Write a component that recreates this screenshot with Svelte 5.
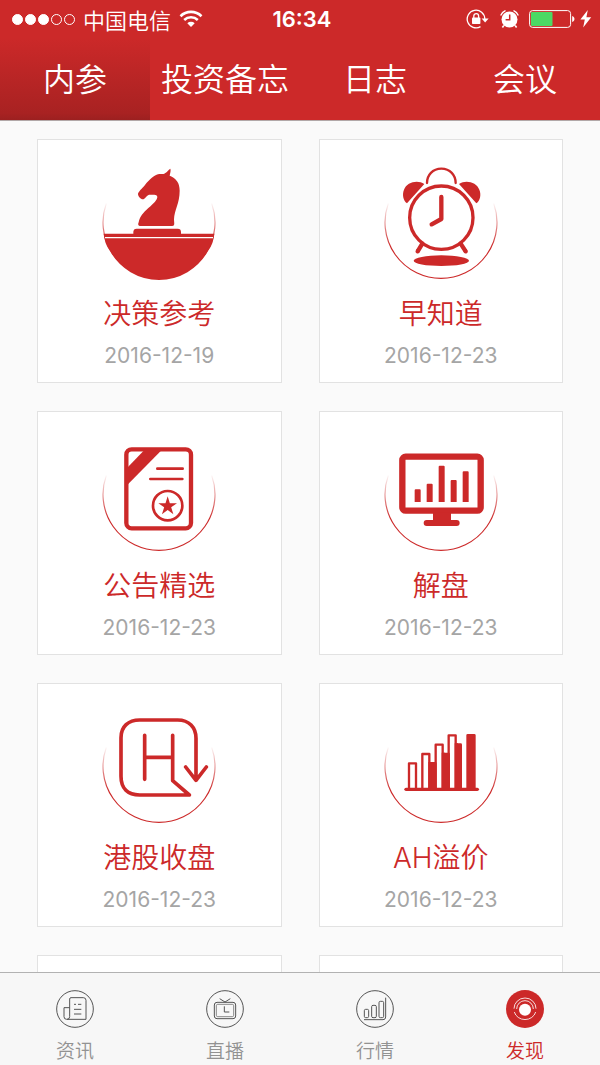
<script lang="ts">
	type Report = { icon: string; title: string; date: string };

	const sections = ['内参', '投资备忘', '日志', '会议'];

	const reports: Report[] = [
		{ icon: 'knight', title: '决策参考', date: '2016-12-19' },
		{ icon: 'alarm', title: '早知道', date: '2016-12-23' },
		{ icon: 'notice', title: '公告精选', date: '2016-12-23' },
		{ icon: 'monitor', title: '解盘', date: '2016-12-23' },
		{ icon: 'hk', title: '港股收盘', date: '2016-12-23' },
		{ icon: 'bars', title: 'AH溢价', date: '2016-12-23' },
		{ icon: '', title: '', date: '' },
		{ icon: '', title: '', date: '' }
	];

	const tabs = [
		{ icon: 'news', label: '资讯' },
		{ icon: 'live', label: '直播' },
		{ icon: 'market', label: '行情' },
		{ icon: 'discover', label: '发现' }
	];

	let section = $state('内参');
	let tab = $state('发现');
</script>

<div class="screen">
	<header>
		<div class="status">
			<div class="carrier">
				<span class="signal">
					{#each [1, 1, 1, 0, 0] as full}
						<i class:full></i>
					{/each}
				</span>
				<span>中国电信</span>
				<svg class="wifi" width="24" height="18" viewBox="0 0 24 18">
					<path d="M1.5 6.2a15 15 0 0 1 21 0M5.2 10a9.8 9.8 0 0 1 13.6 0" fill="none" stroke="#fff" stroke-width="2.6" />
					<path d="M8.3 13.2a5.4 5.4 0 0 1 7.4 0L12 17z" fill="#fff" />
				</svg>
			</div>
			<time>16:34</time>
			<div class="indicators">
				<svg width="23" height="20" viewBox="0 0 23 20">
					<path d="M18.8 10A8.8 8.8 0 1 0 14.5 17.6" fill="none" stroke="#fff" stroke-width="1.3" />
					<path d="M15.6 9.4h7l-3.5 4z" fill="#fff" />
					<rect x="6" y="8.6" width="8.4" height="6.4" rx="0.8" fill="#fff" />
					<path d="M7.8 9V7a2.4 2.4 0 0 1 4.8 0v2" fill="none" stroke="#fff" stroke-width="1.3" />
				</svg>
				<svg width="19" height="20" viewBox="0 0 19 20">
					<circle cx="9.500" cy="10.500" r="8" fill="#fff" />
					<path d="M1 6A8 8 0 0 1 5 1.8M18 6a8 8 0 0 0-4-4.2" fill="none" stroke="#fff" stroke-width="1.4" stroke-linecap="round" />
					<path d="M3.8 16.5l-1.4 2M15.2 16.5l1.4 2" stroke="#fff" stroke-width="1.6" />
					<path d="M9.7 5.5v5.2H5.6" fill="none" stroke="#cc2929" stroke-width="1.5" />
				</svg>
				<svg width="46" height="18" viewBox="0 0 46 18">
					<rect x="0.6" y="0.6" width="41" height="16.8" rx="3" fill="none" stroke="#fff" stroke-width="1" />
					<rect x="2" y="2" width="21.5" height="14" rx="1" fill="#4cd964" />
					<path d="M43.2 6v6c3-1 3-5 0-6z" fill="#fff" />
				</svg>
				<svg width="12" height="18" viewBox="0 0 12 18">
					<path d="M7.8 0L0.4 9.6h4.4L3.2 17.6 11.2 7.2H6.4z" fill="#fff" />
				</svg>
			</div>
		</div>
		<nav class="sections">
			{#each sections as name}
				<button class:active={section === name} onclick={() => (section = name)}>{name}</button>
			{/each}
		</nav>
	</header>

	<main>
		{#each reports as report}
			<a class="card" href="#{report.icon}">
				{#if report.icon}
					<svg class="picture" viewBox="0 0 420 420">
						<defs>
							<linearGradient id="fade-{report.icon}" gradientUnits="userSpaceOnUse" x1="0" y1="155" x2="0" y2="290">
								<stop offset="0" stop-color="#cc2929" stop-opacity="0" />
								<stop offset="1" stop-color="#cc2929" />
							</linearGradient>
						</defs>
						<path
							d="M52 160A168 168 0 1 0 368 160"
							fill="none"
							stroke="url(#fade-{report.icon})"
							stroke-width="3.5"
						/>
						{#if report.icon === 'knight'}
							<path class="solid" d="M44 251H376Q374 280 357 303A168 168 0 0 1 63 303Q46 280 44 251z" />
							<path d="M48 263H372" stroke="#fff" stroke-width="4" />
							<path class="solid" d="M133 254v-8q0-10 10-10h123q10 0 10 10v8z" />
							<path
								class="solid"
								d="M244 56C246 60 244 68 242 77C261 84 272 98 272 122C272 160 256 180 255 208C255 216 257 222 255 225Q254 228 249 228H152Q145 226 149 217C153 198 163 188 178 174C194 160 205 150 205 140Q204 134 196 134H180C174 136 171 142 165 147C158 151 147 140 147 132C148 125 158 117 168 105C182 88 196 76 207 73C216 71 222 74 228 70C235 66 238 59 244 56z"
							/>
						{:else if report.icon === 'alarm'}
							<path class="line" stroke-width="7" d="M168 99c0-24 17-43 43-43s43 19 43 43" />
							<path class="solid" d="M108 160c-12-9-15-27-9-41 8-22 40-31 61-17z" />
							<path class="solid" d="M316 160c12-9 15-27 9-41-8-22-40-31-61-17z" />
							<circle class="line" stroke-width="10" cx="211" cy="203" r="95" />
							<path class="line" stroke-width="13" d="M211 141v66l-29 16" />
							<path class="line" stroke-width="13" stroke-linecap="butt" d="M154 281l-14 23M269 281l15 23" />
							<circle class="solid" cx="141" cy="302" r="6" />
							<circle class="solid" cx="283" cy="302" r="6" />
							<ellipse class="solid" cx="211" cy="332" rx="83" ry="16" />
						{:else if report.icon === 'notice'}
							<g transform="translate(0 24)">
								<rect class="line" stroke-width="13" x="112" y="58" width="194" height="237" rx="16" />
								<path class="solid" d="M164 62h52L114 166v-52z" />
								<path class="line" stroke-width="8" stroke-linecap="butt" d="M205 116h76M184 147h96" />
								<circle class="line" stroke-width="8" cx="236" cy="227" r="44" />
								<path
									class="solid"
									d="M236 199l6.5 20.5h21.5l-17.5 12.6 6.7 20.5-17.2-12.8-17.2 12.8 6.7-20.5L208 219.500h21.500z"
								/>
							</g>
						{:else if report.icon === 'monitor'}
							<g transform="translate(0 24)">
								<rect class="line" stroke-width="19" x="94" y="80" width="235" height="162" rx="10" />
								<path class="solid" d="M186 248h54v22h17q9 0 9 9t-9 9h-90q-9 0-9-9t9-9h19z" />
								<path
									class="solid"
									d="M131 181q0-3 3-3h12q3 0 3 3v35h-18zM167 164q0-3 3-3h12q3 0 3 3v52h-18zM203 110q0-3 3-3h12q3 0 3 3v106h-18zM239 153q0-3 3-3h12q3 0 3 3v63h-18zM275 127q0-3 3-3h12q3 0 3 3v89h-18z"
								/>
							</g>
						{:else if report.icon === 'hk'}
							<g transform="translate(0 18)">
								<path
									class="line"
									stroke-width="11"
									d="M167 106v132M167 172h84M251 106v136l50 43H152c-36 0-56-20-56-56V113c0-33 22-53 56-53h114c34 0 55 22 55 55v122M290 201l31 40 31-40"
								/>
							</g>
						{:else}
							<g transform="translate(0 18)">
								<path class="line" stroke-width="10" d="M105 268h214" />
								<path
									class="line"
									stroke-width="7"
									d="M114 265v-75h21v75M154 265V162h21v103M194 265V134h21v131M233 265V106h21v159"
								/>
								<path
									class="solid"
									d="M178 186h15q4 0 4 4v76h-19zM218 158h15q4 0 4 4v104h-19zM256 130h13q4 0 4 4v132h-17zM286 106q0-4 4-4h20q4 0 4 4v160h-28z"
								/>
								<path class="solid" d="M172 186h10v80h-10zM212 158h10v108h-10zM251 130h10v136h-10z" />
							</g>
						{/if}
					</svg>
					<h2>{report.title}</h2>
					<time>{report.date}</time>
				{/if}
			</a>
		{/each}
	</main>

	<nav class="tabbar">
		{#each tabs as item}
			<button class:active={tab === item.label} onclick={() => (tab = item.label)}>
				<svg width="38" height="38" viewBox="0 0 114 114">
					{#if item.icon === 'discover'}
						<circle cx="57" cy="57" r="57" fill="#cc2929" />
						<circle cx="57" cy="59" r="18" fill="#fff" />
						<g fill="none" stroke="#fff" stroke-width="2.500">
							<path d="M24 56a33 32 0 0 1 66 0M32 57a25 25 0 0 1 50 0M25 66a33 30 0 0 0 64 0" />
						</g>
					{:else}
						<g fill="none" stroke="#555" stroke-width="3">
							<circle cx="57" cy="57" r="55" />
							{#if item.icon === 'news'}
								<path d="M41 80V27q0-4 4-4h37q8 0 8 8v57H32q-8 0-8-8V53h17M41 80q0 8-8 8" />
								<path d="M54 43h6M66 43h10M54 58h22M54 72h22" />
							{:else if item.icon === 'live'}
								<rect x="25" y="37" width="64" height="49" rx="8" />
								<rect x="31" y="43" width="52" height="37" rx="4" stroke-width="2" />
								<path d="M41 26l16 10 16-10M55 49v17h15" />
							{:else}
								<rect x="25" y="58" width="13" height="25" rx="4" />
								<rect x="47" y="46" width="14" height="37" rx="4" />
								<rect x="69" y="34" width="14" height="49" rx="4" />
								<path d="M24 89h57q8 0 8-8V23" />
							{/if}
						</g>
					{/if}
				</svg>
				<span>{item.label}</span>
			</button>
		{/each}
	</nav>
</div>

<style>
	:global(body) {
		margin: 0;
	}

	.screen {
		display: flex;
		flex-direction: column;
		height: 100vh;
		background: #fafafa;
		font-family: Inter, 'Noto Sans CJK SC', sans-serif;
		font-weight: 350;
	}

	button {
		border: 0;
		padding: 0;
		background: none;
		font: inherit;
		color: inherit;
		cursor: pointer;
	}

	header {
		background: #cc2929;
		border-bottom: 1px solid #b2a8a8;
		color: #fff;
	}

	.status {
		display: grid;
		grid-template-columns: 1fr auto 1fr;
		align-items: center;
		height: 38px;
		padding: 0 8px 0 12px;
		font-size: 22px;
	}

	.status time {
		font-weight: 600;
	}

	.carrier,
	.indicators {
		display: flex;
		align-items: center;
	}

	.carrier {
		gap: 8px;
	}

	.signal {
		display: flex;
		gap: 2px;
	}

	.signal i {
		box-sizing: border-box;
		width: 11px;
		height: 11px;
		border: 1px solid #fff;
		border-radius: 50%;
	}

	.signal i.full {
		background: #fff;
	}

	.indicators {
		justify-content: flex-end;
		gap: 5px;
	}

	.indicators svg:nth-child(2) {
		margin: 0 5px 0 6px;
	}

	.sections {
		display: flex;
		height: 82px;
	}

	.sections button {
		flex: 1;
		padding-bottom: 4px;
		font-size: 32px;
		white-space: nowrap;
	}

	.sections button.active {
		background: linear-gradient(#cc2929, #a82222 92%, #9c2020);
	}

	main {
		flex: 1;
		min-height: 0;
		overflow: hidden;
		display: grid;
		grid-template-columns: 1fr 1fr;
		grid-auto-rows: max-content;
		gap: 28px 37px;
		padding: 18px 37px 0;
	}

	.card {
		box-sizing: border-box;
		min-height: 244px;
		padding-top: 10px;
		display: flex;
		flex-direction: column;
		align-items: center;
		background: #fff;
		border: 1px solid #e2e2e2;
		text-decoration: none;
	}

	.picture {
		width: 140px;
		height: 140px;
	}

	.solid {
		fill: #cc2929;
	}

	.line {
		fill: none;
		stroke: #cc2929;
		stroke-linecap: round;
		stroke-linejoin: round;
	}

	.card h2 {
		margin: 0;
		font-size: 28px;
		line-height: 48px;
		font-weight: 350;
		color: #cc2929;
	}

	.card time {
		font-size: 21px;
		line-height: 36px;
		font-weight: 400;
		color: #a5a5a5;
	}

	.tabbar {
		display: flex;
		background: #f7f7f7;
		border-top: 1px solid #b2b2b2;
	}

	.tabbar button {
		flex: 1;
		display: flex;
		flex-direction: column;
		align-items: center;
		gap: 10px;
		padding: 17px 0 0;
		font-size: 19px;
		line-height: 27px;
		color: #929292;
	}

	.tabbar button.active {
		color: #cc2929;
	}
</style>
